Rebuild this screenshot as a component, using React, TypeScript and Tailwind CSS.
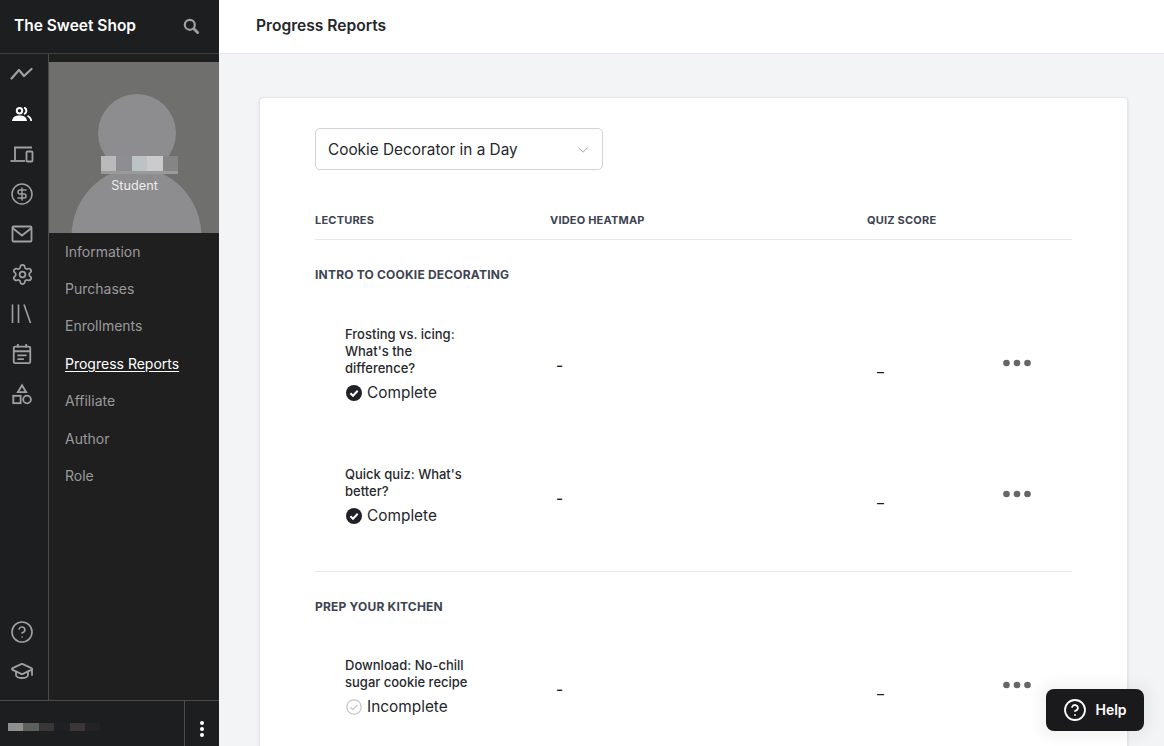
import { CircleDollarSign, CircleHelp, GraduationCap, Settings, ChevronDown } from "lucide-react";

const font = { fontFamily: "Inter, 'Liberation Sans', sans-serif" };

function RailIcon({ children, active }: { children: React.ReactNode; active?: boolean }) {
  return <div className={`flex h-10 w-full items-center justify-center ${active ? "text-white" : "text-[#a0a0a0]"}`}>{children}</div>;
}

function Dots() {
  return (
    <svg width="28" height="8" viewBox="0 0 28 8" className="shrink-0">
      <circle cx="3.5" cy="4" r="3.3" fill="#666" />
      <circle cx="14" cy="4" r="3.3" fill="#666" />
      <circle cx="24.5" cy="4" r="3.3" fill="#666" />
    </svg>
  );
}

function Row({ title, status, offset }: { title: string[]; status: "Complete" | "Incomplete"; offset?: boolean }) {
  return (
    <div className="grid grid-cols-[241px_320px_1fr_69px] items-center pt-[31px] pb-[30px] text-[#1c1e21]">
      <div className="pl-[30px]">
        <div className="text-[13px] leading-[17px] font-medium text-[#26282c]">
          {title.map((t) => (
            <div key={t}>{t}</div>
          ))}
        </div>
        <div className="mt-[4px] flex h-[24px] items-center gap-[5px] text-[15.4px]">
          {status === "Complete" ? (
            <svg width="16" height="16" viewBox="0 0 16 16" className="ml-[1px]">
              <circle cx="8" cy="8" r="8" fill="#1f2126" />
              <path d="M4.4 8.3 L7 10.8 L11.7 5.8" fill="none" stroke="#fff" strokeWidth="2" />
            </svg>
          ) : (
            <svg width="16" height="16" viewBox="0 0 16 16" className="ml-[1px]">
              <circle cx="8" cy="8" r="7.2" fill="none" stroke="#c4c4c4" strokeWidth="1.2" />
              <path d="M4.6 8.2 L7 10.6 L11.6 5.8" fill="none" stroke="#c4c4c4" strokeWidth="1.2" />
            </svg>
          )}
          <span className="text-[#25272b]">{status}</span>
        </div>
      </div>
      <div className={`text-[15.4px] font-medium ${offset ? "mt-[3px]" : ""}`}>-</div>
      <div className="mt-[2px] pl-px text-[15.4px]">_</div>
      <div className="-mt-[6px] flex">
        <Dots />
      </div>
    </div>
  );
}

export default function App() {
  return (
    <div className="flex h-[746px] w-[1164px] overflow-hidden bg-[#f3f4f6]" style={font}>
      <aside className="flex h-full w-[219px] shrink-0 flex-col bg-[#1d1e20]">
        <div className="flex h-[54px] shrink-0 items-center justify-between border-b border-[#3f4042] pr-[20px] pb-[1px] pl-[14px]">
          <span className="text-[15.5px] font-semibold text-white">The Sweet Shop</span>
          <svg width="16" height="16" viewBox="0 0 16 16" fill="none" stroke="#a0a0a0" strokeLinecap="round">
            <circle cx="6.8" cy="6.8" r="5" strokeWidth="2.2" />
            <path d="M10.8 10.8 L14.6 14.6" strokeWidth="2.8" />
          </svg>
        </div>
        <div className="flex min-h-0 flex-1">
          <div className="flex w-[49px] shrink-0 flex-col justify-between border-r border-[#4a4b4d] bg-[#1d1e20] pr-1 pb-[9px]">
            <div>
              <RailIcon>
                <svg width="24" height="24" viewBox="0 0 24 24" fill="none" stroke="currentColor" strokeWidth="2.2" strokeLinecap="round" strokeLinejoin="round">
                  <path d="M1.5 16.5 L9 8 L14 14 L21.5 7" />
                </svg>
              </RailIcon>
              <RailIcon active>
                <svg width="20" height="14" viewBox="0 0 20 14" fill="none" stroke="currentColor" strokeWidth="2" strokeLinecap="round">
                  <circle cx="7.5" cy="3.7" r="2.7" />
                  <path d="M0 14 C0.5 9.5 4 8.5 7.5 8.5 C11 8.5 14.5 9.5 15 14 Z" fill="currentColor" stroke="none" />
                  <path d="M12.8 1 C14.8 1.8 14.8 5.8 12.8 6.6" />
                  <path d="M16.2 9.2 C17.8 10 19 12 19.2 13.4" strokeWidth="1.8" />
                </svg>
              </RailIcon>
              <RailIcon>
                <svg width="24" height="24" viewBox="0 0 24 24" fill="none" stroke="currentColor" strokeWidth="1.8">
                  <path d="M22 5.5 H5 V18" />
                  <path d="M0.5 19 H15" />
                  <rect x="16.5" y="9.5" width="6" height="10" rx="1" />
                </svg>
              </RailIcon>
              <RailIcon>
                <CircleDollarSign size={24} strokeWidth={1.5} />
              </RailIcon>
              <RailIcon>
                <svg width="22" height="22" viewBox="0 0 22 22" fill="none" stroke="currentColor" strokeWidth="1.8">
                  <rect x="1.5" y="3.5" width="19" height="15" rx="1" />
                  <path d="M1.5 5 L11 12.5 L20.5 5" />
                </svg>
              </RailIcon>
              <RailIcon>
                <Settings size={23} strokeWidth={1.8} />
              </RailIcon>
              <RailIcon>
                <svg width="24" height="24" viewBox="0 0 24 24" fill="none" stroke="currentColor" strokeWidth="1.6">
                  <path d="M2.5 2.5 V21" />
                  <path d="M8.5 2.5 V21" />
                  <path d="M14 2.5 L20.5 21" />
                </svg>
              </RailIcon>
              <RailIcon>
                <svg width="22" height="22" viewBox="0 0 24 24" fill="none" stroke="currentColor" strokeWidth="2">
                  <rect x="3" y="4" width="18" height="18" rx="1.5" />
                  <path d="M3 9 H21 M7.5 1 V5 M16.5 1 V5 M7 13.5 H17 M7 17.5 H14" />
                </svg>
              </RailIcon>
              <RailIcon>
                <svg width="22" height="22" viewBox="0 0 24 24" fill="none" stroke="currentColor" strokeWidth="2">
                  <path d="M12 2.5 L16.5 10 H7.5 Z" />
                  <rect x="2.5" y="14" width="8" height="8" />
                  <circle cx="17.5" cy="18" r="4.2" />
                </svg>
              </RailIcon>
            </div>
            <div>
              <div className="flex h-[38px] items-center justify-center text-[#a0a0a0]">
                <CircleHelp size={24} strokeWidth={1.6} />
              </div>
              <RailIcon>
                <GraduationCap size={24} strokeWidth={1.8} />
              </RailIcon>
            </div>
          </div>
          <div className="flex min-w-0 flex-1 flex-col bg-[#1f1f20] pt-2">
            <div className="relative h-[171px] shrink-0 bg-[#6f6f6d]">
              <svg width="170" height="171" viewBox="0 0 170 171" className="absolute inset-0">
                <circle cx="88" cy="71" r="39" fill="#8d8d8f" />
                <ellipse cx="87.5" cy="175" rx="65" ry="69" fill="#8d8d8f" />
              </svg>
              <div className="absolute top-[94px] left-[52px] flex h-[15px]">
                <div className="w-[15px] bg-[#b9bab9]" />
                <div className="w-[16px] bg-[#8e8e92]" />
                <div className="w-[15px] bg-[#bcc3c5]" />
                <div className="w-[16px] bg-[#cbcbce]" />
                <div className="w-[15px] bg-[#858585]" />
              </div>
              <div className="absolute top-[109px] left-[52px] h-[3px] w-[77px] bg-[#9a9a9a]" />
              <div className="absolute top-[115px] left-0 w-full pl-[1px] text-center text-[12.7px] leading-[18px] text-[#ececec]">Student</div>
            </div>
            <nav className="flex flex-col pl-4 text-sm text-[#9a9a9a]">
              <a className="flex h-[37.4px] items-center">Information</a>
              <a className="flex h-[37.4px] items-center">Purchases</a>
              <a className="flex h-[37.4px] items-center">Enrollments</a>
              <a className="flex h-[37.4px] items-center text-white underline underline-offset-2">Progress Reports</a>
              <a className="flex h-[37.4px] items-center">Affiliate</a>
              <a className="flex h-[37.4px] items-center">Author</a>
              <a className="flex h-[37.4px] items-center">Role</a>
            </nav>
          </div>
        </div>
        <div className="flex h-[46px] shrink-0 border-t border-[#4a4b4d] bg-[#1d1e20]">
          <div className="flex flex-1 items-center border-r border-[#4a4b4d] pl-2">
            <div className="mt-[6px] flex h-2">
              <div className="w-[15px] bg-[#8f8f8f]" />
              <div className="w-[16px] bg-[#5c615e]" />
              <div className="w-[15px] bg-[#3a3638]" />
              <div className="w-[16px] bg-[#1f2023]" />
              <div className="w-[15px] bg-[#3a3638]" />
              <div className="w-[15px] bg-[#232326]" />
            </div>
          </div>
          <div className="flex w-[34px] shrink-0 flex-col items-center justify-center gap-[2px] pt-[10px]">
            <div className="size-1 rounded-full bg-white" />
            <div className="size-1 rounded-full bg-white" />
            <div className="size-1 rounded-full bg-white" />
          </div>
        </div>
      </aside>
      <main className="relative min-w-0 flex-1">
        <header className="flex h-[54px] items-center border-b border-[#e5e7eb] bg-white pb-[1px] pl-[37px] text-[15.6px] font-semibold text-[#25272b]">Progress Reports</header>
        <div className="pt-[43px] pr-[36px] pl-[40px]">
          <div className="rounded border border-[#e5e7eb] bg-white pt-[30px] pr-[55px] pb-10 pl-[55px] shadow-sm">
            <div className="flex h-[42px] w-[288px] items-center justify-between rounded-[5px] border border-[#d1d3d6] pt-[2px] pr-[10px] pl-3 text-[15.35px] text-[#25272b]">
              <span>Cookie Decorator in a Day</span>
              <ChevronDown size={18} strokeWidth={1} className="text-[#8a8a8a]" />
            </div>
            <div className="mt-[41px] grid h-[29px] grid-cols-[235px_317px_1fr] border-b border-[#e5e7eb] pb-[10px] text-[11px] leading-[18px] font-bold tracking-[0.2px] text-[#3d4450]">
              <span>LECTURES</span>
              <span>VIDEO HEATMAP</span>
              <span>QUIZ SCORE</span>
            </div>
            <section className="border-b border-[#e5e7eb] pb-[13px]">
              <h2 className="pt-[26px] pb-[11px] text-xs leading-[18px] font-bold tracking-[0.2px] text-[#3d4450]">INTRO TO COOKIE DECORATING</h2>
              <Row title={["Frosting vs. icing:", "What's the", "difference?"]} status="Complete" />
              <Row title={["Quick quiz: What's", "better?"]} status="Complete" offset />
            </section>
            <section>
              <h2 className="pt-[26px] pb-[10px] text-xs leading-[18px] font-bold tracking-[0.2px] text-[#3d4450]">PREP YOUR KITCHEN</h2>
              <Row title={["Download: No-chill", "sugar cookie recipe"]} status="Incomplete" offset />
            </section>
          </div>
        </div>
        <button className="absolute top-[689px] left-[827px] flex h-[42px] w-[98px] items-center justify-center gap-[8px] rounded-lg bg-[#1a1a1c] text-sm font-semibold text-white shadow-[0_0_12px_8px_rgba(0,0,0,0.04)]">
          <CircleHelp size={24} strokeWidth={1.8} />
          Help
        </button>
      </main>
    </div>
  );
}
